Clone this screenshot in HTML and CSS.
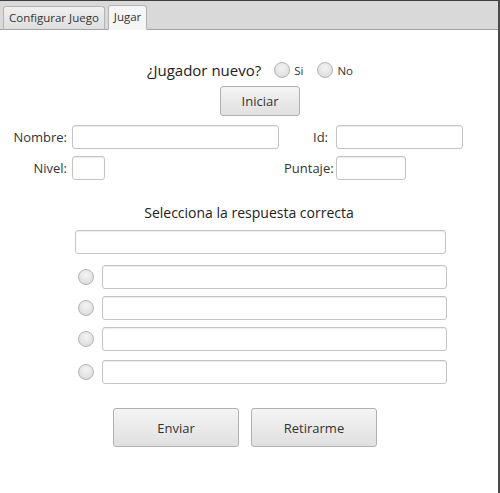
FILE: index.html
```html
<!DOCTYPE html>
<html lang="es">
<head>
<meta charset="utf-8">
<title>Juego</title>
<link rel="stylesheet" href="styles.css">
</head>
<body>
<div class="window">
  <div class="tabbar">
    <div class="tab">Configurar Juego</div>
    <div class="tab selected">Jugar</div>
  </div>
  <div class="content">
    <div class="newplayer">
      <span class="question">¿Jugador nuevo?</span>
      <label class="radio-opt"><span class="radio"></span><span class="small">Si</span></label>
      <label class="radio-opt"><span class="radio"></span><span class="small">No</span></label>
    </div>
    <div class="start-row"><button class="btn btn-start">Iniciar</button></div>
    <div class="form">
      <span class="lbl">Nombre:</span>
      <span class="field"></span>
      <span class="lbl lbl-id">Id:</span>
      <span class="field"></span>
      <span class="lbl">Nivel:</span>
      <span class="field w-nivel"></span>
      <span class="lbl">Puntaje:</span>
      <span class="field w-puntaje"></span>
    </div>
    <div class="heading">Selecciona la respuesta correcta</div>
    <div class="qrow"><span class="field w-question"></span></div>
    <div class="answers">
      <div class="answer"><span class="radio"></span><span class="field w-answer"></span></div>
      <div class="answer"><span class="radio"></span><span class="field w-answer"></span></div>
      <div class="answer"><span class="radio"></span><span class="field w-answer"></span></div>
      <div class="answer last"><span class="radio"></span><span class="field w-answer"></span></div>
    </div>
    <div class="actions">
      <button class="btn btn-big">Enviar</button>
      <button class="btn btn-big">Retirarme</button>
    </div>
  </div>
</div>
</body>
</html>
```

FILE: styles.css
```css
* { box-sizing: border-box; }
html, body { margin: 0; padding: 0; background: #fff; }
body {
  font-family: "Open Sans", "Noto Sans", sans-serif;
  color: #333;
  width: 500px;
  height: 493px;
  overflow: hidden;
}
.window {
  width: 500px;
  height: 493px;
  border-top: 1px solid #3f3f3f;
  border-right: 2px solid #4a4a4a;
  background: #fff;
  display: flex;
  flex-direction: column;
}
.tabbar {
  height: 29px;
  background: #d9d9d9;
  border-bottom: 1px solid #a3a3a3;
  display: flex;
  align-items: flex-end;
  padding-left: 3px;
  gap: 3px;
}
.tab {
  height: 24px;
  margin-bottom: -1px;
  padding: 0 5px;
  font-size: 11.5px;
  line-height: 22px;
  color: #333;
  border: 1px solid #b4b4b4;
  border-bottom-color: #a3a3a3;
  border-radius: 3px 3px 0 0;
  background: linear-gradient(#f0f0f0, #dedede);
  white-space: nowrap;
}
.tab.selected {
  background: #f6f6f6;
  border-bottom-color: #f6f6f6;
  height: 25px;
}
.content {
  flex: 1;
  display: flex;
  flex-direction: column;
}
.newplayer {
  margin-top: 29px;
  height: 22px;
  display: flex;
  align-items: center;
  justify-content: center;
  padding-left: 2px;
}
.question { font-size: 15px; margin-right: 13px; color: #222; }
.radio-opt { display: flex; align-items: center; margin-right: 14px; }
.radio-opt:last-child { margin-right: 0; }
.small { font-size: 11.5px; color: #333; margin-left: 4px; }
.radio {
  width: 16px;
  height: 16px;
  border-radius: 50%;
  border: 1px solid #b3b3b3;
  background: radial-gradient(circle at 50% 35%, #f4f4f4 0%, #e3e3e3 60%, #d6d6d6 100%);
  display: inline-block;
  flex: none;
}
.start-row { margin-top: 5px; padding-left: 220px; display: flex; }
.btn {
  font-family: inherit;
  color: #333;
  border: 1px solid #b0b0b0;
  border-radius: 3px;
  background: linear-gradient(#f4f4f4, #e0e0e0);
  padding: 0;
  cursor: default;
}
.btn-start { width: 80px; height: 30px; font-size: 13px; }
.form {
  margin-top: 9px;
  display: grid;
  grid-template-columns: 67px 207px 47px 127px;
  grid-auto-rows: 24px;
  column-gap: 5px;
  row-gap: 7px;
  align-items: center;
}
.lbl { font-size: 13px; text-align: right; color: #333; white-space: nowrap; }
.lbl-id { padding-right: 3px; }
.field {
  display: block;
  height: 24px;
  border: 1px solid #c4c4c4;
  border-radius: 3px;
  background: #fff;
  box-shadow: inset 0 1px 1px rgba(0,0,0,0.08);
}
.w-nivel { width: 33px; }
.w-puntaje { width: 70px; }
.heading {
  margin-top: 23px;
  text-align: center;
  font-size: 14px;
  color: #222;
  line-height: 20px;
}
.qrow { margin-top: 7px; padding-left: 75px; }
.w-question { width: 371px; }
.answers { margin-top: 11px; display: flex; flex-direction: column; gap: 7px; }
.answer { display: flex; align-items: center; padding-left: 78px; gap: 8px; }
.answer.last { margin-top: 2px; }
.w-answer { width: 345px; }
.actions {
  margin-top: 24px;
  padding-left: 113px;
  display: flex;
  gap: 12px;
}
.btn-big { width: 126px; height: 39px; font-size: 13px; }
```
